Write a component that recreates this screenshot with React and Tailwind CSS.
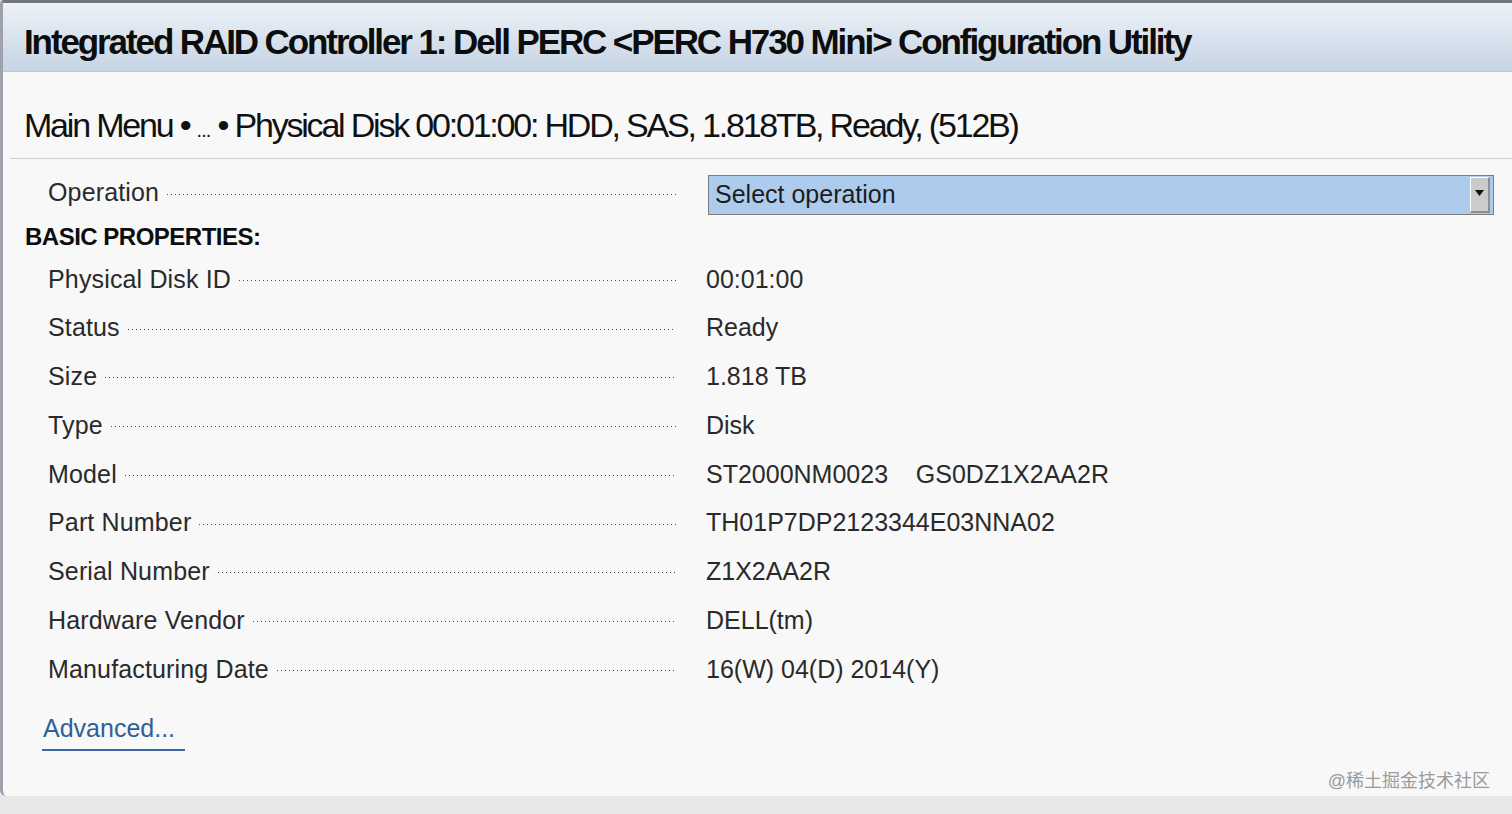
import React from "react";

const rows = [
  ["Physical Disk ID", "00:01:00"],
  ["Status", "Ready"],
  ["Size", "1.818 TB"],
  ["Type", "Disk"],
  ["Model", "ST2000NM0023\u00a0\u00a0\u00a0\u00a0GS0DZ1X2AA2R"],
  ["Part Number", "TH01P7DP2123344E03NNA02"],
  ["Serial Number", "Z1X2AA2R"],
  ["Hardware Vendor", "DELL(tm)"],
  ["Manufacturing Date", "16(W) 04(D) 2014(Y)"],
];

// dotted leader between label and value
const Leader = () => (
  <span className="ml-[8px] mt-[2px] h-px flex-1 bg-[linear-gradient(to_right,#4a4a4a_1px,transparent_1px)] bg-[length:4px_1px] bg-repeat-x" />
);

const Row = ({ label, value }) => (
  <div className="flex h-[48.75px] items-center">
    <div className="flex w-[628px] items-center">
      <span className="whitespace-nowrap tracking-[0.15px]">{label}</span>
      <Leader />
    </div>
    <div className="ml-[30px] whitespace-nowrap">{value}</div>
  </div>
);

export default function App() {
  return (
    <div className="relative flex h-[814px] w-[1512px] flex-col overflow-hidden bg-[#e8e8e8] font-['Liberation_Sans',Arial,sans-serif] text-[#2a2a2a]">
      <div className="flex h-[796px] flex-col overflow-hidden rounded-tl-[4px] rounded-bl-[6px] border-t-[3px] border-l-[3px] border-t-[#72777e] border-l-[#9ea1ab] bg-[#f8f8f8]">
        {/* title bar */}
        <div className="flex h-[69px] items-center border-b border-[#b9c6d5] bg-gradient-to-b from-[#edf2f8] to-[#c6d4e4] pl-[21px] pt-[11px]">
          <h1 className="whitespace-nowrap text-[35px] font-bold tracking-[-2.1px] text-[#0d0d0d]">
            Integrated RAID Controller 1: Dell PERC &lt;PERC H730 Mini&gt; Configuration Utility
          </h1>
        </div>

        {/* breadcrumb */}
        <div className="flex h-[86px] items-center pl-[21px] pt-[20px]">
          <h2 className="whitespace-nowrap text-[34px] tracking-[-2.2px] text-[#111]">
            Main Menu • <span className="text-[20px] tracking-[-1px]">...</span> • Physical Disk 00:01:00: HDD, SAS, 1.818TB, Ready, (512B)
          </h2>
        </div>
        <div className="ml-[7px] border-t border-[#cdcdcd]" />

        <div className="flex flex-col text-[25px]">
          {/* operation */}
          <div className="flex pl-[45px] pt-[16px]">
            <div className="flex h-[36px] w-[628px] items-center">
              <span className="whitespace-nowrap tracking-[0.15px]">Operation</span>
              <Leader />
            </div>
            <div className="ml-[32px] mr-[18px] flex h-[40px] flex-1 items-stretch border border-[#7d7d7d] bg-[#adcbec]">
              <span className="flex flex-1 items-center pl-[6px] text-[#1c1c1c]">Select operation</span>
              <div className="my-[1px] mr-[3px] flex w-[20px] items-center justify-center border-t border-l border-r-2 border-b-2 border-t-white border-l-white border-r-[#8e8e8e] border-b-[#8e8e8e] bg-[#cbcbcb]">
                <svg width="9" height="6" viewBox="0 0 9 6" className="-mt-[4px]">
                  <path d="M0 0h9L4.5 6z" fill="#111" />
                </svg>
              </div>
            </div>
          </div>

          {/* basic properties */}
          <div className="flex h-[40px] items-center pl-[22px] pt-[3px] text-[24px] font-bold tracking-[-0.5px] text-[#0d0d0d]">
            BASIC PROPERTIES:
          </div>

          <div className="flex flex-col pl-[45px]">
            {rows.map(([label, value]) => (
              <Row key={label} label={label} value={value} />
            ))}
          </div>

          <div className="pl-[39px] pt-[20px]">
            <a className="block w-[143px] border-b-2 border-[#3a69a3] pb-[7px] pl-[1px] leading-[28px] text-[#2f5f98]">
              Advanced...
            </a>
          </div>
        </div>
      </div>

      <div className="absolute right-[22px] top-[769px] text-[18px] leading-[24px] text-[#9b9b9b] font-['Liberation_Sans','Noto_Sans_CJK_SC',sans-serif]">
        @稀土掘金技术社区
      </div>
    </div>
  );
}
